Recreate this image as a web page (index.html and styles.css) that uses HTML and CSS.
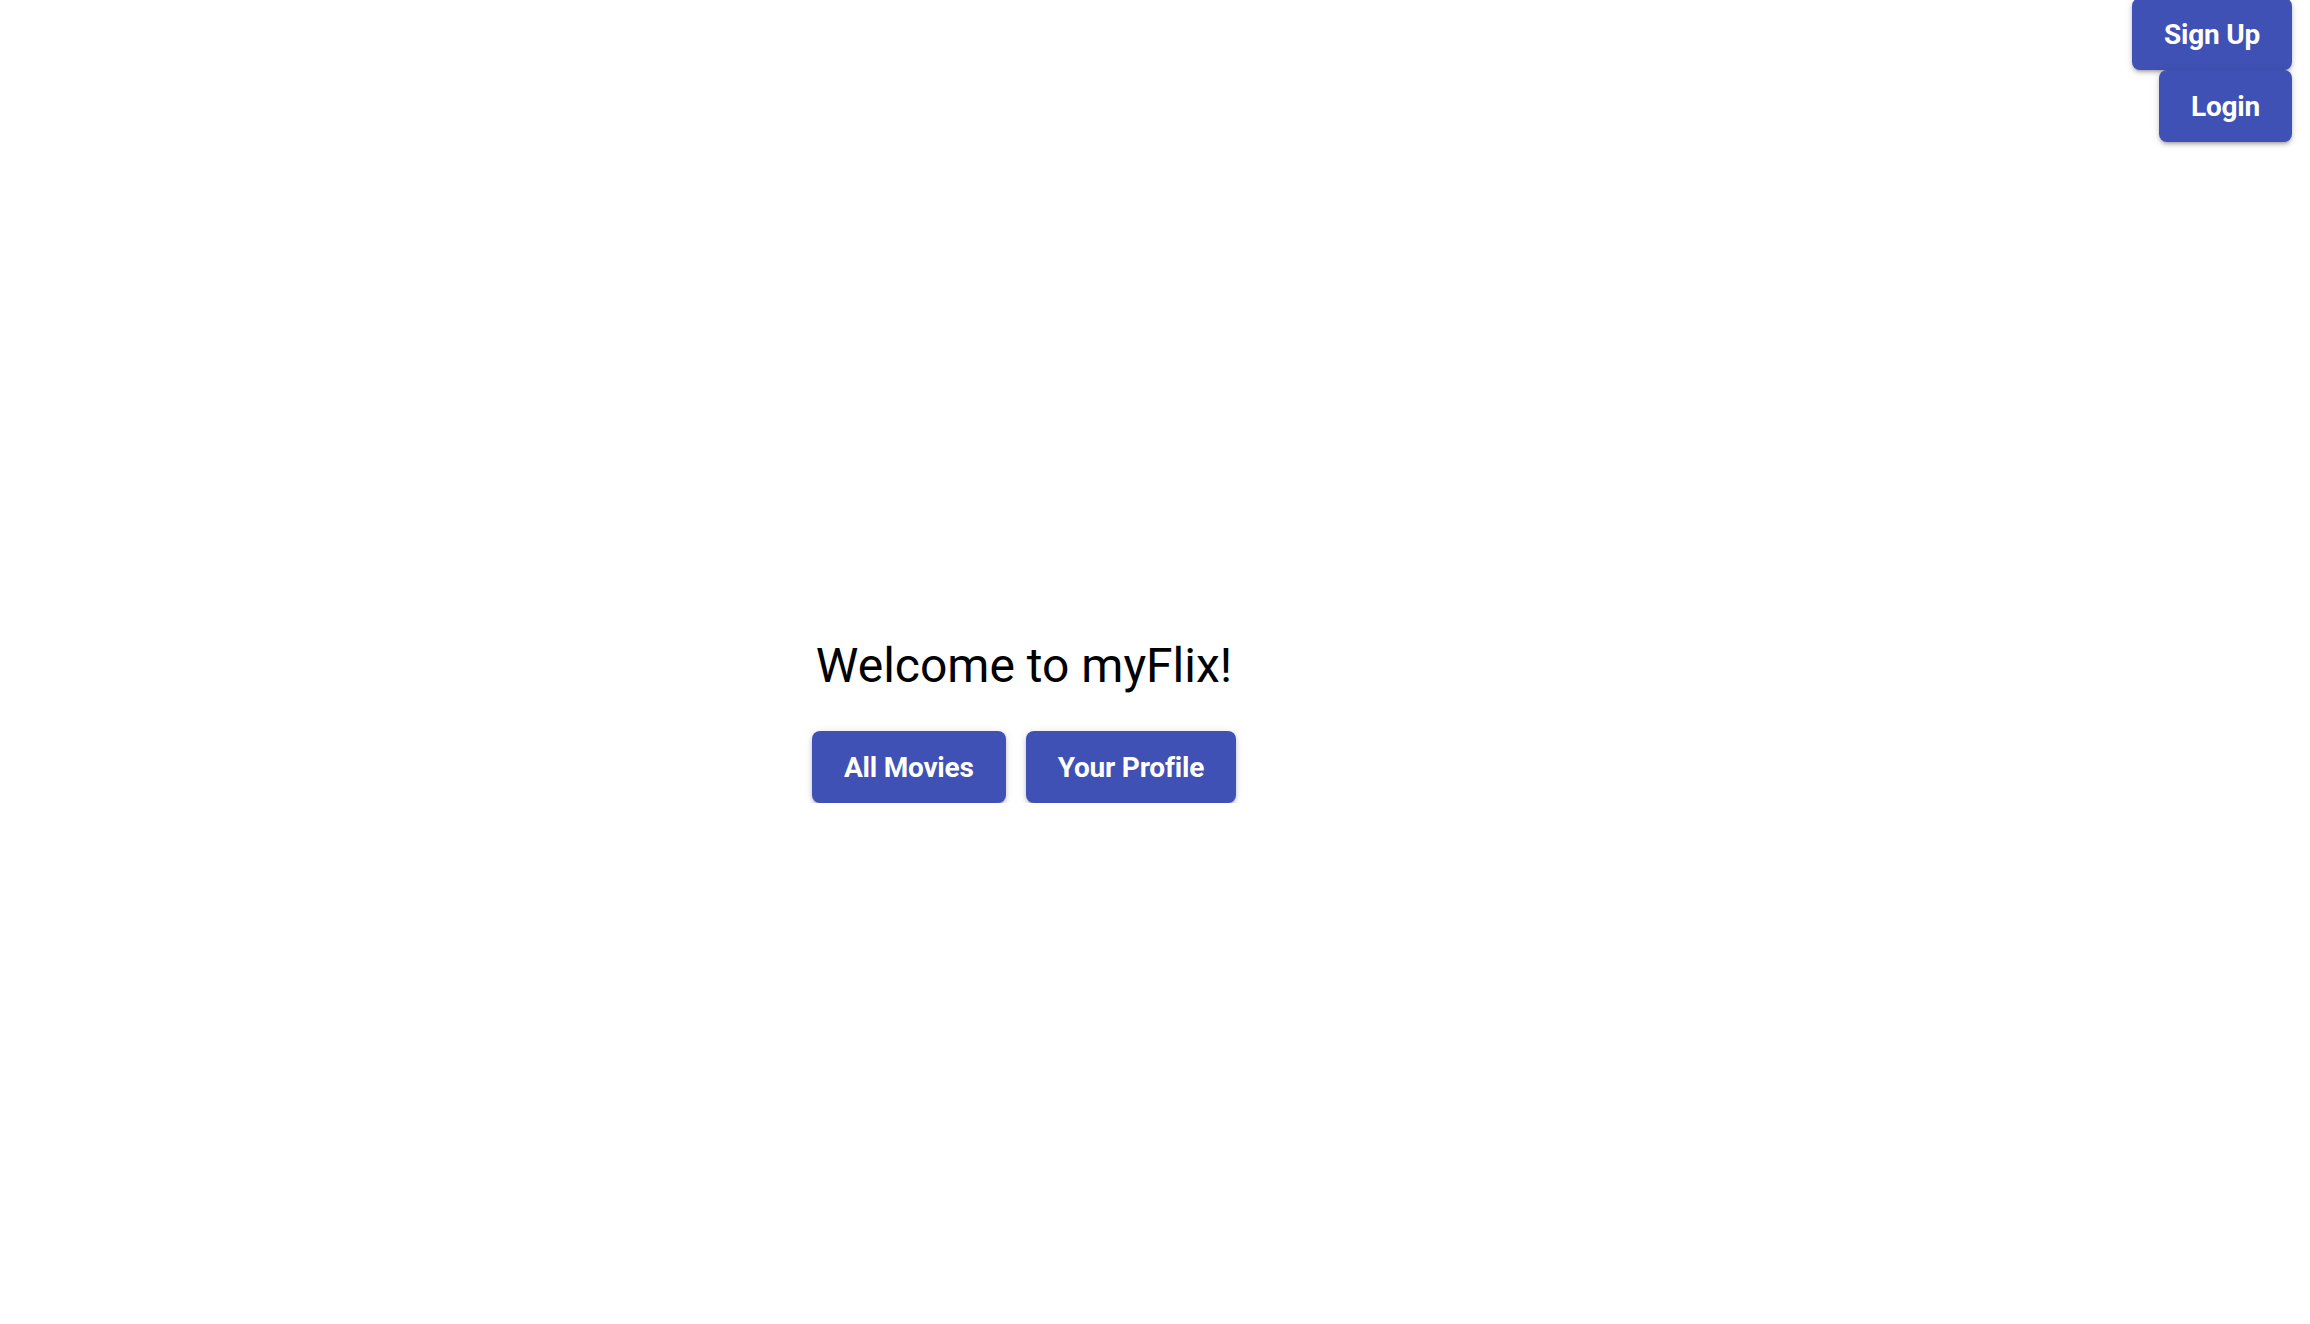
FILE: index.html
```html
<!DOCTYPE html>
<html>
<head>
<meta charset="utf-8">
<link rel="stylesheet" href="styles.css">
</head>
<body>
<nav class="topnav">
  <button class="btn btn-signup">Sign Up</button>
  <button class="btn btn-login">Login</button>
</nav>
<main class="welcome">
  <h1 class="title">Welcome to myFlix!</h1>
  <div class="actions">
    <button class="btn">All Movies</button>
    <button class="btn">Your Profile</button>
  </div>
</main>
</body>
</html>
```
FILE: styles.css
```css
html, body {
  margin: 0;
  padding: 0;
  background: #ffffff;
  font-family: Roboto, "Liberation Sans", Arial, sans-serif;
  overflow: hidden;
}

.topnav {
  display: flex;
  flex-direction: column;
  align-items: flex-end;
  padding-right: 18px;
  margin-top: -2px;
}

.btn {
  display: inline-flex;
  align-items: center;
  justify-content: center;
  height: 72px;
  padding: 0 32px;
  border: none;
  border-radius: 8px;
  background: #3f51b5;
  color: #ffffff;
  font-family: Roboto, "Liberation Sans", Arial, sans-serif;
  font-size: 28px;
  font-weight: 700;
  letter-spacing: -0.2px;
  box-shadow: 0 3px 3px -2px rgba(0,0,0,.22), 0 3px 4px 0 rgba(0,0,0,.14), 0 1px 8px 0 rgba(0,0,0,.12);
  cursor: pointer;
}

.welcome {
  width: 2048px;
  display: flex;
  flex-direction: column;
  align-items: center;
  margin-top: 496px;
}

.title {
  margin: 0;
  font-size: 48px;
  font-weight: 400;
  color: #000000;
  line-height: 56px;
}

.actions {
  display: flex;
  gap: 20px;
  margin-top: 37px;
}
```
